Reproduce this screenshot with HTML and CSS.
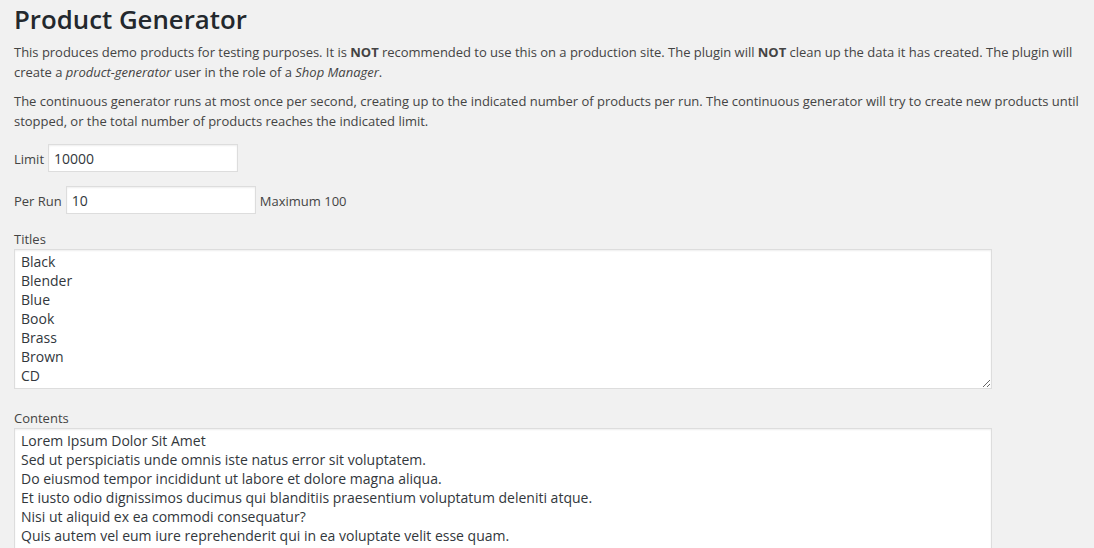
FILE: index.html
```html
<!DOCTYPE html>
<html lang="en">
<head>
<meta charset="utf-8">
<title>Product Generator</title>
<link rel="stylesheet" href="styles.css">
</head>
<body>
<div class="wrap">
  <h1 class="title">Product Generator</h1>
  <p class="intro">This produces demo products for testing purposes. It is <strong>NOT</strong> recommended to use this on a production site. The plugin will <strong>NOT</strong> clean up the data it has created. The plugin will create a <em>product-generator</em> user in the role of a <em>Shop Manager</em>.</p>
  <p class="intro">The continuous generator runs at most once per second, creating up to the indicated number of products per run. The continuous generator will try to create new products until stopped, or the total number of products reaches the indicated limit.</p>
  <div class="field-row">
    <label class="inline-label" for="limit">Limit</label>
    <input class="text-input" id="limit" type="text" value="10000">
  </div>
  <div class="field-row">
    <label class="inline-label" for="per-run">Per Run</label>
    <input class="text-input" id="per-run" type="text" value="10">
    <span class="hint">Maximum 100</span>
  </div>
  <div class="field-block">
    <label class="block-label" for="titles">Titles</label>
    <textarea class="area area-titles" id="titles">Black
Blender
Blue
Book
Brass
Brown
CD
Chair
Chrome
Clock
Coffee
Computer</textarea>
  </div>
  <div class="field-block">
    <label class="block-label" for="contents">Contents</label>
    <textarea class="area area-contents" id="contents">Lorem Ipsum Dolor Sit Amet
Sed ut perspiciatis unde omnis iste natus error sit voluptatem.
Do eiusmod tempor incididunt ut labore et dolore magna aliqua.
Et iusto odio dignissimos ducimus qui blanditiis praesentium voluptatum deleniti atque.
Nisi ut aliquid ex ea commodi consequatur?
Quis autem vel eum iure reprehenderit qui in ea voluptate velit esse quam.
Ut enim ad minima veniam, quis nostrum exercitationem ullam corporis suscipit laboriosam.
Nemo enim ipsam voluptatem quia voluptas sit aspernatur aut odit aut fugit.</textarea>
  </div>
</div>
</body>
</html>
```

FILE: styles.css
```css
html, body {
  margin: 0;
  padding: 0;
  overflow: hidden;
  background: #f1f1f1;
}

body {
  font-family: "Open Sans", "Noto Sans", sans-serif;
  font-size: 13px;
  line-height: 1.5;
  color: #444;
}

.wrap {
  padding: 0 10px 0 14px;
}

.title {
  margin: 0;
  padding: 4px 0 0;
  font-size: 25.8px;
  font-weight: 600;
  line-height: 30px;
  color: #23282d;
}

.intro {
  margin: 9px 0 10px;
  letter-spacing: -0.02px;
}

.field-row {
  display: flex;
  align-items: baseline;
  gap: 4px;
  margin: 13px 0 14px;
}

.text-input {
  box-sizing: border-box;
  width: 190px;
  height: 28px;
  margin: 0;
  padding: 3px 5px;
  border: 1px solid #ddd;
  background: #fff;
  box-shadow: inset 0 1px 2px rgba(0, 0, 0, 0.07);
  font-family: inherit;
  font-size: 14px;
  color: #32373c;
  outline: none;
}

.hint {
  margin-left: 0;
}

.field-block {
  margin-top: 15px;
}

.block-label {
  display: block;
  line-height: 20px;
}

.area {
  display: block;
  box-sizing: border-box;
  width: 978px;
  margin: 0;
  padding: 2px 6px 2px 6px;
  border: 1px solid #ddd;
  background: #fff;
  box-shadow: inset 0 1px 2px rgba(0, 0, 0, 0.07);
  font-family: inherit;
  font-size: 14px;
  line-height: 19px;
  color: #32373c;
  overflow: hidden;
  resize: both;
  outline: none;
}

.area-titles {
  height: 140px;
}

.area-contents {
  height: 200px;
}

.field-block + .field-block {
  margin-top: 19px;
}
```
